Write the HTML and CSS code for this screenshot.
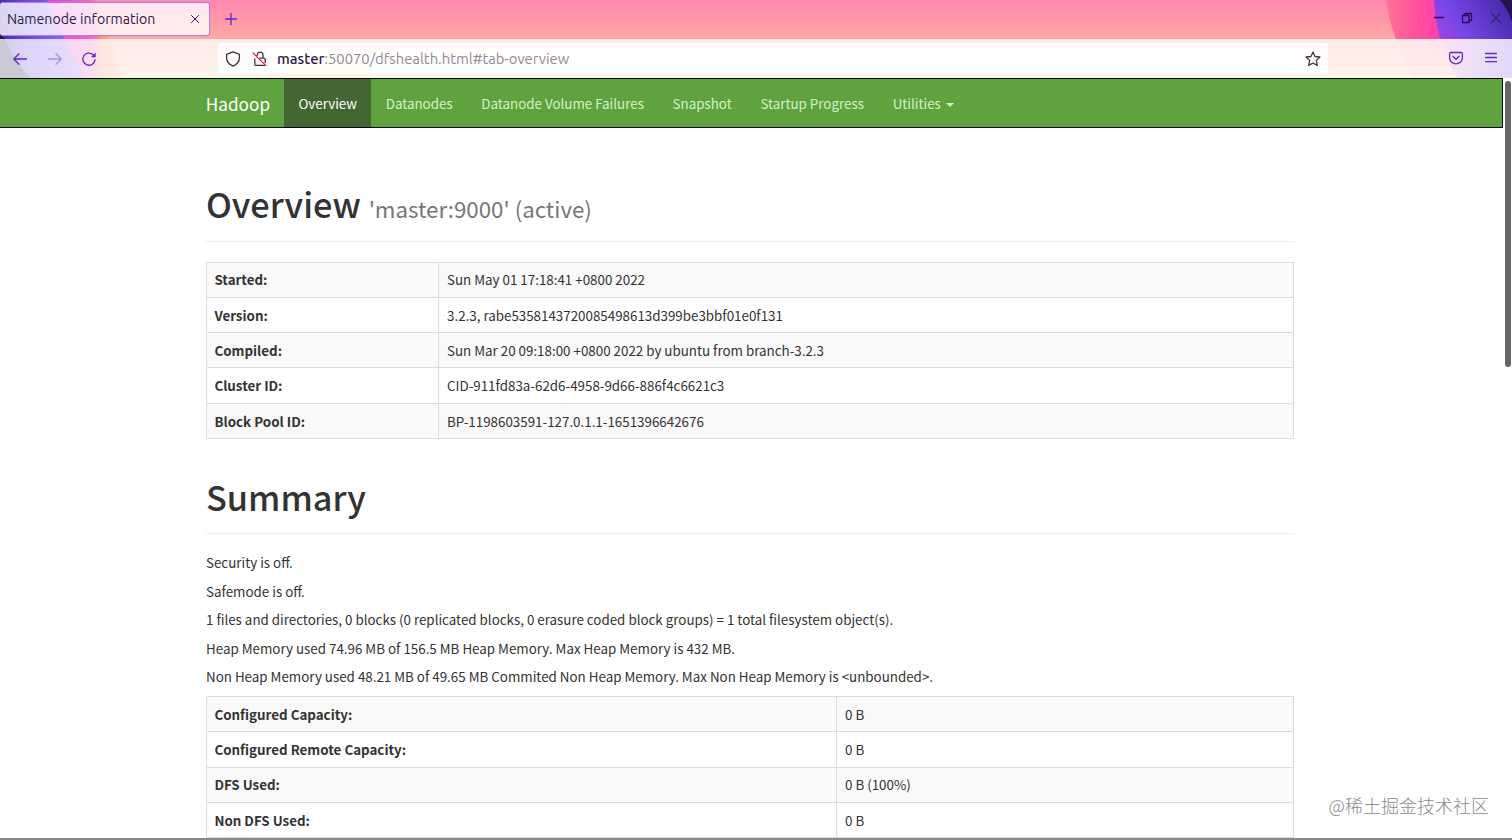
FILE: index.html
```
<!DOCTYPE html>
<html lang="en">
<head>
    <meta charset="UTF-8">
    <meta name="viewport" content="width=device-width, initial-scale=1.0">
    <title>Namenode information</title>
    <link rel="stylesheet" href="styles.css">
</head>
<body>
    <div class="browser">
        <svg class="theme" width="1512" height="78" viewBox="0 0 1512 78">
            <defs>
                <linearGradient id="pink" x1="0" y1="0" x2="0" y2="1">
                    <stop offset="0" stop-color="#ff87b0"/>
                    <stop offset="0.5" stop-color="#ffa8a4"/>
                    <stop offset="1" stop-color="#ffcfa8"/>
                </linearGradient>
                <linearGradient id="left" gradientUnits="userSpaceOnUse" x1="55" y1="0" x2="125" y2="0">
                    <stop offset="0" stop-color="#e84bdc"/>
                    <stop offset="0.5" stop-color="#f565c0"/>
                    <stop offset="0.7" stop-color="#ff9a7c"/>
                    <stop offset="1" stop-color="#ffb78c"/>
                </linearGradient>
                <linearGradient id="violet" gradientUnits="userSpaceOnUse" x1="0" y1="0" x2="75" y2="0">
                    <stop offset="0" stop-color="#4a2bb0"/>
                    <stop offset="0.4" stop-color="#6a4ee4"/>
                    <stop offset="1" stop-color="#9a68f4"/>
                </linearGradient>
                <linearGradient id="purple" gradientUnits="userSpaceOnUse" x1="1440" y1="50" x2="1505" y2="10">
                    <stop offset="0" stop-color="#a746dc"/>
                    <stop offset="0.4" stop-color="#7745e8"/>
                    <stop offset="1" stop-color="#4a2cae"/>
                </linearGradient>
                <linearGradient id="lower" x1="0" y1="0" x2="1" y2="0">
                    <stop offset="0" stop-color="#ec8cd0"/>
                    <stop offset="1" stop-color="#7a58ee"/>
                </linearGradient>
                <linearGradient id="hot" gradientUnits="userSpaceOnUse" x1="1386" y1="0" x2="1440" y2="0">
                    <stop offset="0" stop-color="#ff7394"/>
                    <stop offset="0.6" stop-color="#ff4fa0"/>
                    <stop offset="1" stop-color="#ff3fa8"/>
                </linearGradient>
                <linearGradient id="fade" x1="0" y1="0" x2="0" y2="1">
                    <stop offset="0" stop-color="#ffb9a4" stop-opacity="0.6"/>
                    <stop offset="1" stop-color="#ffc9a8" stop-opacity="0.9"/>
                </linearGradient>
            </defs>
            <rect width="1512" height="78" fill="url(#pink)"/>
            <path d="M0 0H95Q108 30 124 78H0z" fill="url(#left)"/>
            <path d="M0 0H47Q58 30 85 78H0z" fill="url(#violet)"/>
            <path d="M0 34L5 39Q12 58 30 78H0z" fill="#24164d"/>
            <path d="M1386 0H1512V78H1414Q1392 40 1386 0z" fill="url(#hot)"/>
            <path d="M1395 39H1512V78H1414Q1400 58 1395 39z" fill="url(#fade)"/>
            <path d="M1434 0H1512V39H1440Q1435 20 1434 0z" fill="url(#purple)"/>
            <path d="M1440 39H1512V78H1458Q1444 58 1440 39z" fill="url(#lower)"/>
            <path d="M1500 0H1512V22Q1508 9 1500 0z" fill="#24124e"/>
        </svg>
        <div class="tab-bar">
            <div class="tab">
                <span>Namenode information</span>
                <svg width="10" height="10" viewBox="0 0 10 10"><path d="M1.5 1.5l7 7M8.5 1.5l-7 7"/></svg>
            </div>
            <svg class="new-tab" width="12" height="12" viewBox="0 0 12 12"><path d="M6 .5v11M.5 6h11"/></svg>
            <div class="window-buttons">
                <svg width="10" height="12" viewBox="0 0 10 12"><path d="M.5 5.5h9"/></svg>
                <svg width="12" height="12" viewBox="0 0 12 12"><path d="M1.5 3.5h6.5v7H1.5zM4 3.5V1.5h6.5v7H8"/></svg>
                <svg class="faded" width="12" height="12" viewBox="0 0 12 12"><path d="M1.5 1.5l9 9M10.5 1.5l-9 9"/></svg>
            </div>
        </div>
        <div class="toolbar">
            <div class="nav-buttons">
                <svg width="16" height="16" viewBox="0 0 16 16"><path d="M14.5 8H2M7 2.8L1.8 8 7 13.2"/></svg>
                <svg class="disabled" width="16" height="16" viewBox="0 0 16 16"><path d="M1.5 8H14M9 2.8L14.2 8 9 13.2"/></svg>
                <svg width="16" height="16" viewBox="0 0 16 16"><path d="M14 8.6A6.1 6.1 0 1 1 12.2 3.8L13.7 5.3"/><path class="solid" d="M14.7 1.5V6.3H9.9z"/></svg>
            </div>
            <div class="url-bar">
                <svg width="16" height="16" viewBox="0 0 16 16"><path d="M8 .9L14.4 3.4V6.8C14.4 10.6 11.6 13.6 8 15.1 4.4 13.6 1.6 10.6 1.6 6.8V3.4z"/></svg>
                <svg width="16" height="16" viewBox="0 0 16 16"><path d="M5.2 4.4V4a2.9 2.9 0 0 1 5.8 0V7M2.8 7.8V13.2Q2.8 14.4 4 14.4H12.6M8 7.2H11.6Q13.2 7.2 13.2 8.6V11.6"/><path class="slash" d="M1.2 2L13.9 14.6"/></svg>
                <span class="url"><b>master</b>:50070/dfshealth.html#tab-overview</span>
                <svg class="star" width="16" height="16" viewBox="0 0 16 16"><path d="M8 1.1L10 5.5 14.9 6 11.3 9.4 12.3 14.4 8 12 3.7 14.4 4.7 9.4 1.1 6 6 5.5z"/></svg>
            </div>
            <div class="menu-buttons">
                <svg width="14" height="14" viewBox="0 0 14 14"><path d="M2 1.5H12Q13.4 1.5 13.4 3V6.6A6.4 6.2 0 0 1 .6 6.6V3Q.6 1.5 2 1.5zM3.9 5.3L7 8.3 10.1 5.3"/></svg>
                <svg width="12" height="12" viewBox="0 0 12 12"><path d="M.5 1.5h11M.5 5.5h11M.5 9.7h11"/></svg>
            </div>
        </div>
    </div>

    <div class="page">
        <div class="navbar">
            <a class="brand">Hadoop</a>
            <a class="active">Overview</a>
            <a>Datanodes</a>
            <a>Datanode Volume Failures</a>
            <a>Snapshot</a>
            <a>Startup Progress</a>
            <a>Utilities <span class="caret"></span></a>
        </div>

        <div class="container">
            <h1>Overview <small>'master:9000' (active)</small></h1>
            <table class="info">
                <tr><th>Started:</th><td>Sun May 01 17:18:41 +0800 2022</td></tr>
                <tr><th>Version:</th><td>3.2.3, rabe5358143720085498613d399be3bbf01e0f131</td></tr>
                <tr><th>Compiled:</th><td>Sun Mar 20 09:18:00 +0800 2022 by ubuntu from branch-3.2.3</td></tr>
                <tr><th>Cluster ID:</th><td>CID-911fd83a-62d6-4958-9d66-886f4c6621c3</td></tr>
                <tr><th>Block Pool ID:</th><td>BP-1198603591-127.0.1.1-1651396642676</td></tr>
            </table>

            <h1 class="summary-title">Summary</h1>
            <p>Security is off.</p>
            <p>Safemode is off.</p>
            <p>1 files and directories, 0 blocks (0 replicated blocks, 0 erasure coded block groups) = 1 total filesystem object(s).</p>
            <p>Heap Memory used 74.96 MB of 156.5 MB Heap Memory. Max Heap Memory is 432 MB.</p>
            <p>Non Heap Memory used 48.21 MB of 49.65 MB Commited Non Heap Memory. Max Non Heap Memory is &lt;unbounded&gt;.</p>
            <table class="stats">
                <tr><th>Configured Capacity:</th><td>0 B</td></tr>
                <tr><th>Configured Remote Capacity:</th><td>0 B</td></tr>
                <tr><th>DFS Used:</th><td>0 B (100%)</td></tr>
                <tr><th>Non DFS Used:</th><td>0 B</td></tr>
            </table>
        </div>
        <div class="scrollbar"></div>
        <div class="watermark">@稀土掘金技术社区</div>
    </div>
</body>
</html>
```
FILE: styles.css
```
* {
    box-sizing: border-box;
}

body {
    margin: 0;
    height: 840px;
    overflow: hidden;
    background-color: #fff;
    color: #333;
    font-family: "Noto Sans CJK SC", sans-serif;
    font-size: 13.36px;
    line-height: 19.1px;
}

svg {
    display: block;
    flex: none;
    fill: none;
    stroke: currentColor;
    stroke-width: 1.3;
    stroke-linejoin: round;
    stroke-linecap: round;
}

/* browser window */
.browser {
    position: relative;
    height: 78px;
    font-family: Ubuntu, "Noto Sans", sans-serif;
    color: #5b2bc4;
}

.theme {
    position: absolute;
    top: 0;
    left: 0;
    stroke: none;
}

.tab-bar {
    position: relative;
    display: flex;
    align-items: center;
    height: 39px;
}

.tab {
    display: flex;
    align-items: center;
    justify-content: space-between;
    width: 210px;
    height: 34px;
    margin-bottom: 2px;
    padding: 2px 9px 0 7px;
    border: 1px solid #b27be6;
    border-left: none;
    border-radius: 3px;
    background-color: rgba(255, 255, 255, 0.8);
    color: #2b1748;
    font-size: 14.15px;
}

.tab svg {
    margin-bottom: 2px;
    stroke-width: 1;
}

.new-tab {
    margin-left: 15px;
    margin-bottom: 2px;
}

.window-buttons {
    display: flex;
    gap: 17px;
    margin-left: auto;
    margin-right: 10px;
    margin-bottom: 3px;
    color: #2b0b4d;
}

.window-buttons .faded {
    opacity: 0.6;
}

.toolbar {
    position: relative;
    display: flex;
    align-items: center;
    height: 39px;
    background-color: rgba(255, 255, 255, 0.77);
}

.nav-buttons {
    display: flex;
    gap: 18.5px;
    width: 218px;
    padding-left: 12px;
}

.disabled {
    opacity: 0.4;
}

.solid {
    fill: currentColor;
    stroke: none;
}

.url-bar {
    display: flex;
    align-items: center;
    width: 1110px;
    height: 31px;
    padding: 0 7px;
    border-radius: 3px;
    background-color: #fffdfb;
    color: #3b3445;
}

.url-bar svg + svg {
    margin-left: 11px;
}

.slash {
    stroke: #e22850;
}

.url {
    margin-left: 9px;
    font-size: 14.8px;
    color: #8f8998;
}

.url b {
    font-weight: 500;
    color: #2b1748;
}

.url-bar .star {
    margin-left: auto;
}

.menu-buttons {
    display: flex;
    align-items: center;
    gap: 22px;
    margin-left: auto;
    margin-right: 15px;
    margin-bottom: 1px;
}

/* page */
.page {
    position: relative;
    height: 762px;
    overflow: hidden;
    border-bottom: 2px solid #888;
}

.navbar {
    display: flex;
    width: 1503px;
    height: 50px;
    padding-left: 191.4px;
    border: 1px solid #080808;
    border-left: none;
    background-color: #5fa33e;
}

.navbar a {
    padding: 15px 14.35px;
    color: #d2f3c4;
    white-space: nowrap;
}

.navbar .brand {
    padding-right: 14px;
    color: #fff;
    font-size: 17.2px;
}

.navbar .active {
    background-color: #446633;
    color: #fff;
}

.caret {
    display: inline-block;
    margin-left: 2px;
    vertical-align: middle;
    border-top: 4px solid;
    border-left: 4px solid transparent;
    border-right: 4px solid transparent;
}

.container {
    width: 1089px;
    margin-left: 206px;
    padding-top: 56px;
}

h1 {
    height: 58px;
    margin: 0 0 19.6px;
    border-bottom: 1px solid #eee;
    font-size: 34.3px;
    font-weight: 500;
    line-height: 38px;
}

h1 small {
    color: #777;
    font-size: 22.3px;
    font-weight: 400;
}

table {
    width: 1088px;
    border-collapse: collapse;
    table-layout: fixed;
}

th,
td {
    height: 35.3px;
    padding: 0.3px 8px 0;
    border: 1px solid #ddd;
    text-align: left;
}

th {
    padding-left: 7.4px;
}

tr:nth-child(odd) {
    background-color: #f9f9f9;
}

.info th {
    width: 232px;
}

.stats th {
    width: 630px;
}

.summary-title {
    height: 57px;
    margin-top: 38px;
    margin-bottom: 19px;
}

p {
    margin: 0 0 9.5px;
}

.scrollbar {
    position: absolute;
    top: 3px;
    right: 1px;
    width: 6px;
    height: 286px;
    border-radius: 3px;
    background-color: #666;
}

.watermark {
    position: absolute;
    right: 23px;
    bottom: 21px;
    color: #8c8c8c;
    font-size: 18px;
    font-weight: 300;
    line-height: 24px;
}
```
